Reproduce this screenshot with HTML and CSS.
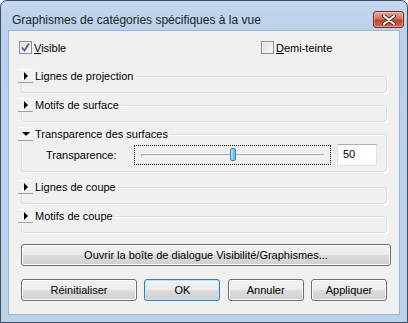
FILE: index.html
```html
<!DOCTYPE html>
<html lang="fr">
<head>
  <meta charset="UTF-8">
  <title>Graphismes de catégories spécifiques à la vue</title>
  <link rel="stylesheet" href="styles.css">
</head>
<body>

  <div class="window">
    <div class="titlebar">
      <span class="title">Graphismes de catégories spécifiques à la vue</span>
      <div class="close">
        <svg width="14" height="10" viewBox="0 0 14 10">
          <path d="M2 1 L12 9 M12 1 L2 9" stroke="#5a2a25" stroke-width="4" stroke-linecap="round"/>
          <path d="M2 1 L12 9 M12 1 L2 9" stroke="#fff" stroke-width="2" stroke-linecap="round"/>
        </svg>
      </div>
    </div>

    <div class="client">
      <div class="checks">
        <label class="check first">
          <span class="box">
            <svg width="11" height="11" viewBox="0 0 11 11"><path d="M2 5.5 L4.5 8.5 L9 1.5" fill="none" stroke="#4a5f97" stroke-width="1.8"/></svg>
          </span>
          <span><u>V</u>isible</span>
        </label>
        <label class="check">
          <span class="box"></span>
          <span><u>D</u>emi-teinte</span>
        </label>
      </div>

      <fieldset class="group">
        <legend><span class="toggle"><i class="arrow right"></i></span>Lignes de projection</legend>
      </fieldset>

      <fieldset class="group">
        <legend><span class="toggle"><i class="arrow right"></i></span>Motifs de surface</legend>
      </fieldset>

      <fieldset class="group open">
        <legend><span class="toggle"><i class="arrow down"></i></span>Transparence des surfaces</legend>
        <div class="slider-row">
          <span class="slider-label">Transparence:</span>
          <div class="slider">
            <div class="track">
              <div class="thumb" style="left: 50%"></div>
            </div>
          </div>
          <div class="textbox">50</div>
        </div>
      </fieldset>

      <fieldset class="group gap">
        <legend><span class="toggle"><i class="arrow right"></i></span>Lignes de coupe</legend>
      </fieldset>

      <fieldset class="group">
        <legend><span class="toggle"><i class="arrow right"></i></span>Motifs de coupe</legend>
      </fieldset>

      <button class="btn wide">Ouvrir la boîte de dialogue Visibilité/Graphismes...</button>

      <div class="actions">
        <button class="btn reset">Réinitialiser</button>
        <button class="btn default">OK</button>
        <button class="btn">Annuler</button>
        <button class="btn">Appliquer</button>
      </div>
    </div>
  </div>

</body>
</html>
```

FILE: styles.css
```css
* {
  margin: 0;
  padding: 0;
  box-sizing: border-box;
}

body {
  width: 408px;
  height: 323px;
  overflow: hidden;
  background: #fff;
  font-family: "Liberation Sans", Arial, sans-serif;
  font-size: 11px;
  color: #000;
}

.window {
  width: 408px;
  height: 323px;
  border: 1px solid #3f4f63;
  border-radius: 7px 7px 0 0;
  background: linear-gradient(#c3d7ee, #b9d0ea 40px, #bcd3ec);
  padding: 0 7px 7px 7px;
  display: flex;
  flex-direction: column;
}

.titlebar {
  height: 29px;
  display: flex;
  align-items: center;
  justify-content: space-between;
}

.title {
  font-size: 12px;
  padding-left: 4px;
  padding-top: 8px;
  color: #1e1e1e;
}

.close {
  width: 31px;
  height: 17px;
  margin-top: 8px;
  margin-right: -4px;
  border: 1px solid #6e3029;
  border-radius: 3px;
  background: linear-gradient(#e6a598, #d2705f 45%, #c1412b 55%, #cf6a50);
  box-shadow: inset 0 0 0 1px rgba(255,255,255,0.35);
  display: flex;
  align-items: center;
  justify-content: center;
}

.client {
  flex: 1;
  background: #f0f0f0;
  border: 1px solid #9fb4cd;
  padding: 10px 8px 0 10px;
  display: flex;
  flex-direction: column;
}

.checks {
  display: flex;
  height: 13px;
}

.check {
  display: flex;
  align-items: center;
  gap: 2px;
}

.check.first {
  width: 242px;
}

.check u {
  text-decoration: underline;
}

.box {
  width: 13px;
  height: 13px;
  border: 1px solid #8e8f8f;
  background: linear-gradient(135deg, #dcdcdc, #fbfbfb);
  box-shadow: inset 0 0 0 1px #f4f4f4;
  display: flex;
  align-items: center;
  justify-content: center;
}

.group {
  margin: 15px 4px 0 2px;
  border: 1px solid #d5dfe5;
  border-radius: 3px;
  box-shadow: inset 1px 1px 0 #fff, 1px 1px 0 #fff;
  padding: 0 0 9px;
}

.group + .group {
  margin-top: 5px;
}

.group.gap {
  margin-top: 8px;
}

.group legend {
  margin-left: -4px;
  display: flex;
  align-items: center;
  height: 14px;
  padding-right: 2px;
}

.toggle {
  width: 15px;
  height: 14px;
  border-top: 1px solid #fcfcfc;
  border-bottom: 1px solid #a0a0a0;
  display: flex;
  align-items: center;
  justify-content: center;
  margin-right: 2px;
}

.arrow {
  width: 0;
  height: 0;
  border-style: solid;
}

.arrow.right {
  border-width: 4px 0 4px 4px;
  border-color: transparent transparent transparent #000;
}

.arrow.down {
  border-width: 4px 4px 0 4px;
  border-color: #000 transparent transparent transparent;
}

.group.open {
  padding: 3px 0 5px;
}

.slider-row {
  display: flex;
  align-items: center;
  height: 22px;
}

.slider-label {
  width: 112px;
  padding-left: 24px;
}

.slider {
  width: 197px;
  height: 20px;
  border: 1px dotted #000;
  padding: 0 6px;
  display: flex;
  align-items: center;
}

.track {
  position: relative;
  flex: 1;
  height: 3px;
  border-top: 1px solid #b0b0b0;
  border-left: 1px solid #b0b0b0;
  border-bottom: 1px solid #fff;
  background: #e7eaea;
}

.thumb {
  position: absolute;
  top: -7px;
  width: 6px;
  height: 13px;
  margin-left: -3px;
  border: 1px solid #3c7fb1;
  border-radius: 2px;
  background: linear-gradient(90deg, #b8e3f8, #5cb8ea);
}

.textbox {
  margin-left: 6px;
  width: 40px;
  height: 22px;
  background: #fff;
  border: 1px solid #e2e3ea;
  border-top-color: #abadb3;
  padding: 3px 0 0 5px;
}

.btn {
  font-family: inherit;
  font-size: 11px;
  color: #000;
  height: 22px;
  border: 1px solid #707070;
  border-radius: 3px;
  background: linear-gradient(#f2f2f2, #ebebeb 50%, #dddddd 50%, #cfcfcf);
  box-shadow: inset 0 0 0 1px #fcfcfc;
}

.btn.wide {
  margin: 11px 0 0 2px;
}

.actions {
  display: flex;
  justify-content: space-between;
  margin: 13px 4px 0 2px;
}

.actions .btn {
  width: 76px;
}

.actions .btn.reset {
  width: 116px;
}

.btn.default {
  border-color: #3c7fb1;
  box-shadow: inset 0 0 0 1px #b9e6fb;
}
```
